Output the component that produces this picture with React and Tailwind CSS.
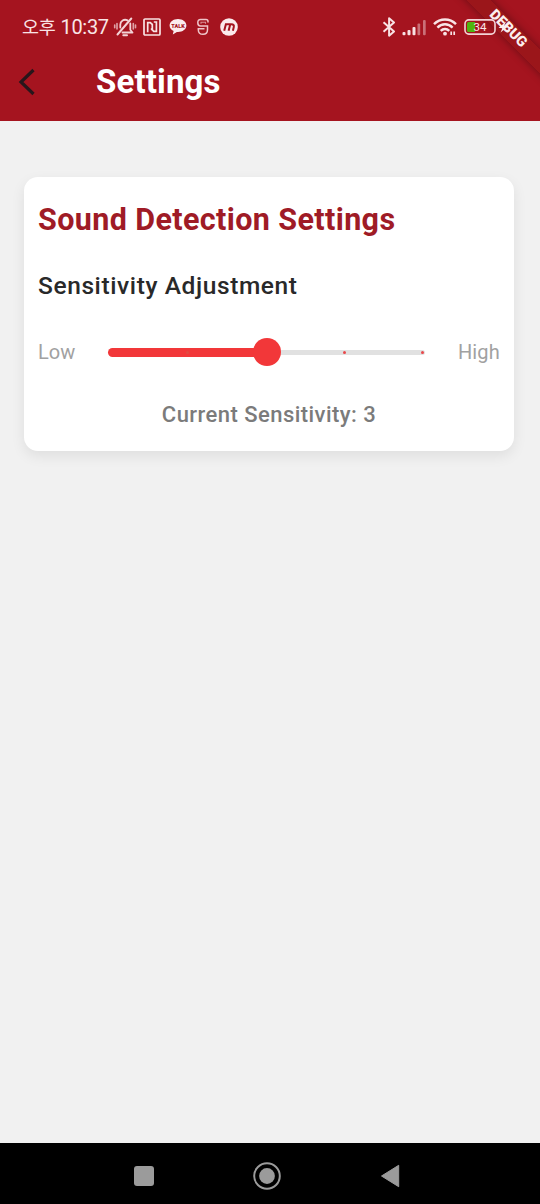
import React from 'react';

function MutedBell() {
  return (
    <svg className="h-[22px] w-6 shrink-0" viewBox="0 0 24 22" fill="none" stroke="#f3d3d6" strokeWidth="1.8" strokeLinecap="round" strokeLinejoin="round">
      <path d="M9.500 16.500H19.500L17.300 13.800V7.500M14.600 4.400C11 2.600 7.300 5 7.300 8.800V11.500" />
      <path d="M4.500 18.500L18.300 2.500" strokeWidth="2" />
      <path d="M10.300 19.200H14" strokeWidth="2" />
      <path d="M4 7.500V13M1.700 9V11.700M20.300 7.500V13M22.500 9V11.700" strokeWidth="1.600" opacity=".75" />
    </svg>
  );
}

function NfcIcon() {
  return (
    <svg className="h-[18px] w-[18px] shrink-0" viewBox="0 0 18 18" fill="none" stroke="#f8e2e4">
      <rect x="1" y="1" width="16" height="16" rx="1" strokeWidth="1.700" />
      <path d="M4.700 14.200V4.700H7.300L9.300 6.500V12.300" strokeWidth="1.700" />
      <path d="M8 10.500L10.700 13.300H13.400V4H10.800" strokeWidth="1.700" />
    </svg>
  );
}

function TalkIcon() {
  return (
    <svg className="h-[18px] w-[18px] shrink-0" viewBox="0 0 18 18">
      <path d="M9 1C4.300 1 .6 3.900.6 7.500c0 2.400 1.600 4.400 4 5.500l-.8 3.600 4.100-2.700L9 14c4.700 0 8.400-2.900 8.400-6.500S13.700 1 9 1Z" fill="#fbecee" />
      <text x="9" y="9.500" textAnchor="middle" fontFamily="Roboto, sans-serif" fontSize="5.500" fontWeight="900" fill="#a5141f">TALK</text>
    </svg>
  );
}

function SIcon() {
  return (
    <svg className="h-[18px] w-[14px] shrink-0" viewBox="0 0 14 18" fill="none" stroke="#efc4c8" strokeWidth="1.500">
      <path d="M12 4.500V3.500C12 2.200 11.200 1.500 10 1.500H4.500C2.800 1.500 1.800 2.600 1.800 4.800C1.800 6.900 2.800 8 4.500 8H11.500V11.800C11.500 14.800 9.800 16.300 7 16.300C4 16.300 2.300 14.800 2.300 11.800V10.800H8.500" />
      <path d="M5 5.800V4.300H9.500V5.800" strokeWidth="1.100" opacity=".7" />
    </svg>
  );
}

function MIcon() {
  return (
    <svg className="h-[18px] w-[18px] shrink-0" viewBox="0 0 18 18">
      <circle cx="9" cy="9" r="8.800" fill="#fbeaec" />
      <path d="M4.200 12.800L5.900 6.300H11.300Q14.500 6.300 13.800 9L12.900 12.800M8.600 12.800L10.200 6.500" fill="none" stroke="#a5141f" strokeWidth="2" />
    </svg>
  );
}

function BluetoothIcon() {
  return (
    <svg className="h-5 w-[14px] shrink-0" viewBox="0 0 14 20" fill="none" stroke="#f8e2e4" strokeWidth="2" strokeLinejoin="round">
      <path d="M1.500 5.300L12 14.500L7.100 18.700V1.300L12 5.500L1.500 14.700" />
    </svg>
  );
}

function SignalIcon() {
  return (
    <svg className="h-[17px] w-[25px] shrink-0" viewBox="0 0 25 17" fill="#f8e2e4">
      <rect x="0.500" y="13" width="3" height="3.300" rx="1" />
      <rect x="5.500" y="11" width="3" height="5.300" rx="1" />
      <rect x="10.500" y="8" width="3" height="8.300" rx="1" />
      <rect x="15.500" y="4.500" width="2.700" height="11.800" rx="1" opacity=".45" />
      <rect x="21" y="1" width="2.700" height="15.300" rx="1" opacity=".45" />
    </svg>
  );
}

function WifiIcon() {
  return (
    <svg className="h-[18px] w-6 shrink-0" viewBox="0 0 24 18" fill="none" stroke="#f9e4e6" strokeWidth="2.400">
      <path d="M1 6.200C7.200-.1 16.800-.1 23 6.200" />
      <path d="M4.400 9.600C8.800 5.200 15.200 5.200 19.600 9.600" />
      <path d="M7.700 12.900C10.200 10.400 13.800 10.400 16.300 12.900" />
      <circle cx="12" cy="15.700" r="1.900" fill="#f9e4e6" stroke="none" />
      <path d="M18.200 13.500V17M21.200 13.500V17" strokeWidth="1.700" />
    </svg>
  );
}

function BatteryIcon() {
  return (
    <svg className="h-4 w-[46px] shrink-0" viewBox="0 0 46 16">
      <rect x="1" y=".9" width="30" height="14.200" rx="3.800" fill="none" stroke="#f3d3d6" strokeWidth="1.600" />
      <path d="M4.500 3H11V13H4.500Q3 13 3 11.500V4.500Q3 3 4.500 3Z" fill="#4fb50f" />
      <text x="16" y="12.100" textAnchor="middle" fontFamily="Roboto, sans-serif" fontSize="11.500" fontWeight="400" fill="#fae6e8">34</text>
      <path d="M42 2.500L34.500 9H38.500L36.500 13.500L44.500 7H40Z" fill="#fbeeee" />
    </svg>
  );
}

function StatusBar() {
  return (
    <div className="relative z-10 flex h-[54px] items-center pl-[22px]">
      <span className="w-[91px] whitespace-nowrap font-['Roboto','Noto_Sans_CJK_KR',sans-serif] text-[20px] leading-none tracking-[-0.300px] text-[#f9e4e6]">
        <span className="mr-[5px] text-[18.500px] font-normal">오후</span>
        <span>10:37</span>
      </span>
      <MutedBell />
      <div className="ml-[6px] flex items-center">
        <NfcIcon />
        <div className="ml-2 flex"><TalkIcon /></div>
        <div className="ml-[9px] flex"><SIcon /></div>
        <div className="ml-[10px] flex"><MIcon /></div>
      </div>
      <div className="ml-[144px] flex items-center">
        <BluetoothIcon />
        <div className="ml-[6px] flex"><SignalIcon /></div>
        <div className="ml-[6px] flex"><WifiIcon /></div>
        <div className="ml-[7px] flex"><BatteryIcon /></div>
      </div>
    </div>
  );
}

function DebugRibbon() {
  return (
    <div className="pointer-events-none absolute top-0 right-0 h-[110px] w-[110px] overflow-hidden">
      <div className="absolute top-[21px] left-[-2px] flex h-[17px] w-40 rotate-45 items-center justify-center bg-[#981719]/80 pr-[1px] text-[14.500px] leading-none font-black text-[#fbeeee] shadow-[0_0_8px_rgba(0,0,0,0.350)]">
        DEBUG
      </div>
    </div>
  );
}

function Slider() {
  return (
    <div className="relative flex h-7 w-[320px] items-center">
      <div className="h-[9px] w-[159px] rounded-l-full bg-[#f23739]" />
      <div className="h-[5px] w-[158px] rounded-r-full bg-[#e1e1e1]" />
      <span className="absolute left-[78px] size-[3px] rounded-full bg-[#df4b43]" />
      <span className="absolute left-[235px] size-[3px] rounded-full bg-[#e8484b]" />
      <span className="absolute left-[313px] size-[3px] rounded-full bg-[#e8484b]" />
      <span className="absolute left-[144.500px] size-7 rounded-full bg-[#f23739]" />
    </div>
  );
}

export default function App() {
  return (
    <div className="relative flex h-[1204px] w-[540px] flex-col overflow-hidden bg-[#f1f1f1] font-['Roboto',sans-serif]">
      <header className="h-[121px] shrink-0 bg-[#a5141f]">
        <StatusBar />
        <div className="flex h-[56px] items-center pl-[18px]">
          <svg className="h-7 w-[18px]" viewBox="0 0 18 28" fill="none" stroke="#28161b" strokeWidth="3.200">
            <path d="M15.500 2L3 14L15.500 26" />
          </svg>
          <h1 className="mb-[2px] ml-[60px] text-[33px] leading-none font-bold tracking-[0.150px] text-white">Settings</h1>
        </div>
      </header>

      <main className="flex-1 pt-[56px] pl-6">
        <section className="flex h-[274px] w-[490px] flex-col rounded-[14px] bg-white px-[14px] shadow-[0_5px_14px_rgba(0,0,0,0.080)]">
          <h2 className="mt-[25px] text-[30.500px] leading-[36px] font-bold tracking-[0.380px] whitespace-nowrap text-[#9f1b26]">Sound Detection Settings</h2>
          <h3 className="mt-[33px] text-[24.500px] leading-[30px] font-medium tracking-[0.600px] whitespace-nowrap text-[#292929]">Sensitivity Adjustment</h3>
          <div className="mt-[37px] flex h-7 items-center text-[20px] text-[#a1a1a1]">
            <span className="w-[70px]">Low</span>
            <Slider />
            <span className="ml-[30px] tracking-[0.100px]">High</span>
          </div>
          <p className="mt-[35px] text-center text-[22px] leading-[28px] font-medium tracking-[0.450px] text-[#7b7b7b]">Current Sensitivity: 3</p>
        </section>
      </main>

      <nav className="flex h-[61px] shrink-0 items-center bg-black pt-[4px] pl-[134px]">
        <div className="size-5 rounded-[3px] bg-[#9b9b9b]" />
        <svg className="ml-[99px] size-7" viewBox="0 0 28 28">
          <circle cx="14" cy="14" r="12.800" fill="none" stroke="#9b9b9b" strokeWidth="2" />
          <circle cx="14" cy="14" r="7.900" fill="#9b9b9b" />
        </svg>
        <svg className="ml-[99px] h-6 w-5" viewBox="0 0 20 24">
          <path d="M1.500 12L18.700 1.300V22.700Z" fill="#9b9b9b" stroke="#9b9b9b" strokeLinejoin="round" />
        </svg>
      </nav>
      <DebugRibbon />
    </div>
  );
}
